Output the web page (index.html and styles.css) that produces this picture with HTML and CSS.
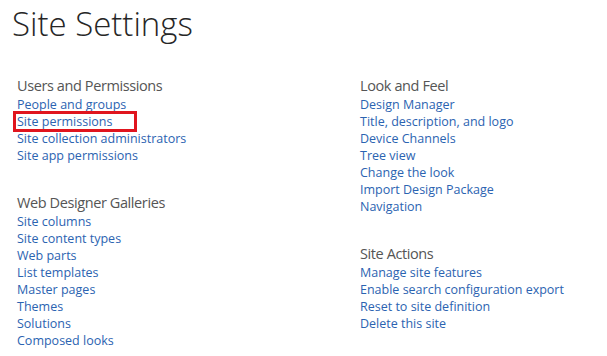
FILE: index.html
```html
<!DOCTYPE html>
<html lang="en">
<head>
  <meta charset="UTF-8">
  <title>Site Settings</title>
  <link rel="stylesheet" href="styles.css">
</head>
<body>
  <h1 class="page-title">Site Settings</h1>

  <div class="columns">
    <div class="column">
      <div class="section">
        <h2>Users and Permissions</h2>
        <ul>
          <li><a href="#">People and groups</a></li>
          <li class="marked"><a href="#">Site permissions</a></li>
          <li><a href="#">Site collection administrators</a></li>
          <li><a href="#">Site app permissions</a></li>
        </ul>
      </div>
      <div class="section">
        <h2>Web Designer Galleries</h2>
        <ul>
          <li><a href="#">Site columns</a></li>
          <li><a href="#">Site content types</a></li>
          <li><a href="#">Web parts</a></li>
          <li><a href="#">List templates</a></li>
          <li><a href="#">Master pages</a></li>
          <li><a href="#">Themes</a></li>
          <li><a href="#">Solutions</a></li>
          <li><a href="#">Composed looks</a></li>
        </ul>
      </div>
    </div>

    <div class="column">
      <div class="section">
        <h2>Look and Feel</h2>
        <ul>
          <li><a href="#">Design Manager</a></li>
          <li><a href="#">Title, description, and logo</a></li>
          <li><a href="#">Device Channels</a></li>
          <li><a href="#">Tree view</a></li>
          <li><a href="#">Change the look</a></li>
          <li><a href="#">Import Design Package</a></li>
          <li><a href="#">Navigation</a></li>
        </ul>
      </div>
      <div class="section">
        <h2>Site Actions</h2>
        <ul>
          <li><a href="#">Manage site features</a></li>
          <li><a href="#">Enable search configuration export</a></li>
          <li><a href="#">Reset to site definition</a></li>
          <li><a href="#">Delete this site</a></li>
        </ul>
      </div>
    </div>
  </div>
</body>
</html>
```

FILE: styles.css
```css
body {
  margin: 0;
  padding: 0;
  background: #fff;
  font-family: 'Open Sans', sans-serif;
  color: #444;
}
.page-title {
  margin: 0;
  padding: 2px 0 0 12px;
  font-size: 33px;
  font-weight: 300;
  line-height: 44px;
  color: #262626;
}
.columns {
  display: flex;
  padding: 30px 0 0 17px;
}
.column {
  flex: none;
  width: 343px;
}
.column:last-child {
  flex: 1;
  width: auto;
}
.section {
  margin-bottom: 29px;
}
.section:last-child {
  margin-bottom: 0;
}
.section h2 {
  margin: 0 0 1px;
  font-size: 14.5px;
  font-weight: 400;
  letter-spacing: -0.4px;
  line-height: 19px;
  color: #555;
}
ul {
  list-style: none;
  margin: 0;
  padding: 0;
}
li {
  font-size: 12.5px;
  line-height: 17px;
}
li a {
  color: #2b63b1;
  text-decoration: none;
}
.marked {
  position: relative;
}
.marked::after {
  content: "";
  position: absolute;
  left: -4px;
  top: -2px;
  width: 118px;
  height: 15px;
  border: 3px solid #e0151e;
}
```
